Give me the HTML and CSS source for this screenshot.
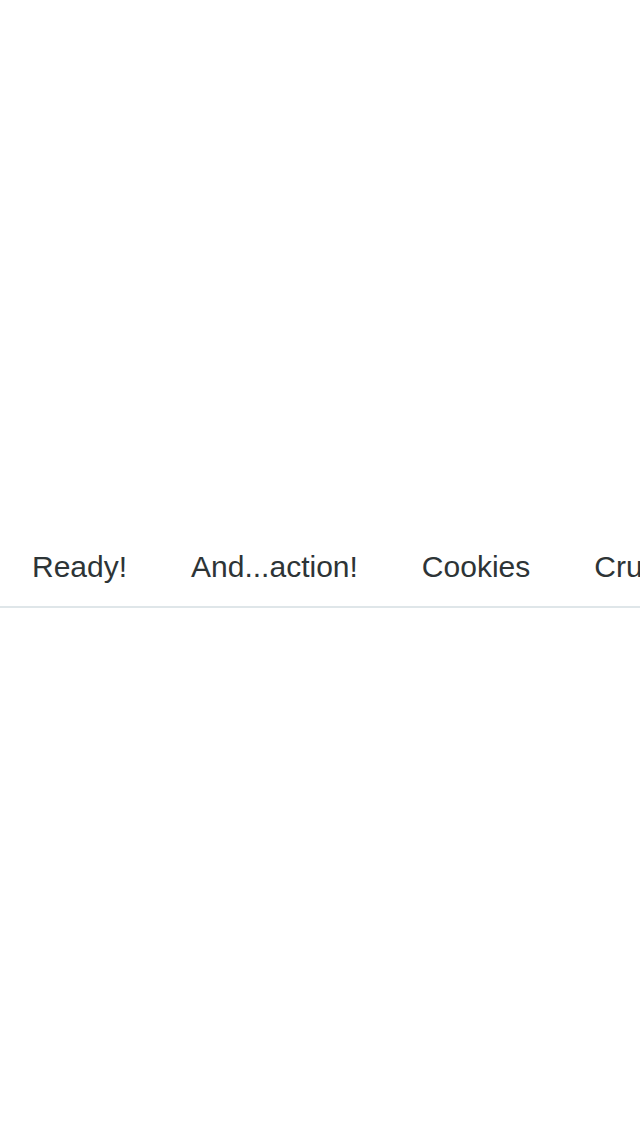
FILE: index.html
```html
<!DOCTYPE html>
<html lang="en">
<head>
<meta charset="utf-8">
<title>Tabs</title>
<link rel="stylesheet" href="styles.css">
</head>
<body>
<div class="page">
  <nav class="tabs">
    <a class="tab">Ready!</a>
    <a class="tab">And...action!</a>
    <a class="tab">Cookies</a>
    <a class="tab">Crumbs</a>
    <a class="tab">Snacks</a>
  </nav>
</div>
</body>
</html>
```
FILE: styles.css
```css
html, body {
  margin: 0;
  padding: 0;
  background: #ffffff;
}
.page {
  height: 1136px;
  display: flex;
  align-items: center;
  overflow: hidden;
}
.tabs {
  width: 100%;
  height: 80px;
  box-sizing: border-box;
  display: flex;
  align-items: center;
  border-bottom: 2px solid #dfe6e9;
  overflow: hidden;
  white-space: nowrap;
  font-family: "Liberation Sans", Arial, sans-serif;
  font-size: 30px;
  color: #2d3436;
}
.tab {
  flex: none;
  padding: 0 32px;
}
```
